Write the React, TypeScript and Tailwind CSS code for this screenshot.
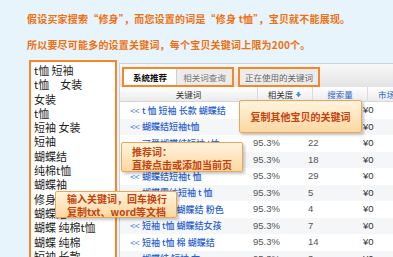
import React from 'react';

const cjk = { fontFamily: '"Noto Sans CJK SC", "Noto Sans", sans-serif' };

const inputWords = [
  't恤 短袖',
  't恤　女装',
  '女装',
  't恤',
  '短袖 女装',
  '短袖',
  '蝴蝶结',
  '纯棉t恤',
  '蝴蝶袖',
  '修身',
  '蝴蝶结',
  '蝴蝶 纯棉t恤',
  '蝴蝶 纯棉',
  '短袖 长款',
  '蝴蝶结 t恤',
];

const rows = [
  { kw: 't 恤 短袖 长款 蝴蝶结', rel: '95.3%', vol: '22', price: '¥0' },
  { kw: '蝴蝶结短袖t恤', rel: '95.3%', vol: '22', price: '¥0' },
  { kw: '可爱蝴蝶结短袖 t恤', rel: '95.3%', vol: '22', price: '¥0' },
  { kw: '韩版蝴蝶结短袖', rel: '95.3%', vol: '18', price: '¥0' },
  { kw: '蝴蝶结短袖t 恤', rel: '95.3%', vol: '29', price: '¥0' },
  { kw: '蝴蝶雪纺短袖 t 恤', rel: '95.3%', vol: '5', price: '¥0' },
  { kw: '短袖 t恤 蝴蝶结 粉色', rel: '95.3%', vol: '4', price: '¥0' },
  { kw: '短袖 t恤 蝴蝶结女孩', rel: '95.3%', vol: '7', price: '¥0' },
  { kw: '短袖 t恤 棉 蝴蝶结', rel: '95.3%', vol: '14', price: '¥0' },
  { kw: '蝴蝶结 短袖 女', rel: '95.3%', vol: '3', price: '¥0' },
];

const Callout: React.FC<{ className: string; children: React.ReactNode }> = ({ className, children }) => (
  <div
    className={`absolute rounded-[2px] border border-[#f0a458] bg-gradient-to-b from-[#fff4de] to-[#fcd7a0] text-[10px] font-bold leading-[13px] text-[#c4420c] shadow-[2px_2px_3px_rgba(0,0,0,0.22)] ${className}`}
  >
    {children}
  </div>
);

const App: React.FC = () => {
  return (
    <div className="relative h-[257px] w-[393px] overflow-hidden bg-[#e7f4fc]" style={cjk}>
      {/* Intro text */}
      <div className="pl-[27px] pt-[6px] text-[10px] font-bold leading-[26px] tracking-[0.2px] text-[#f0700f]">
        <div>假设买家搜索“修身”，而您设置的词是“修身 t恤”，宝贝就不能展现。</div>
        <div>所以要尽可能多的设置关键词，每个宝贝关键词上限为200个。</div>
      </div>

      <div className="mt-[2px] flex">
        {/* Keyword input box */}
        <div className="ml-[29px] h-[210px] w-[88px] shrink-0 border-2 border-[#f5862a] bg-white px-[3px] pt-[1px] text-[11px] leading-[14.3px] text-[#222]">
          {inputWords.map((w, i) => (
            <div key={i} className="whitespace-pre">{w}</div>
          ))}
        </div>

        {/* Result panel */}
        <div className="ml-[2px] mt-[3px] flex-1 border border-r-0 border-[#c9d3dc] bg-white">
          <div className="flex h-[23px] items-end gap-[4px] bg-gradient-to-b from-[#f8f8f8] to-[#e3e3e3] pl-[2px]">
            <div className="flex h-[20px] w-[112px] border-2 border-[#f5862a]">
              <div className="flex w-[52px] items-center justify-center bg-white text-[8.5px] font-bold text-[#111]">
                系统推荐
              </div>
              <div className="flex flex-1 items-center justify-center border-l border-[#cfcfcf] bg-[#ececec] text-[8.5px] text-[#777]">
                相关词查询
              </div>
            </div>
            <div className="flex h-[20px] w-[82px] items-center justify-center border-2 border-[#f5862a] bg-[#ececec] text-[8.5px] text-[#666]">
              正在使用的关键词
            </div>
          </div>

          {/* Header */}
          <div className="grid h-[15px] grid-cols-[137px_55px_55px_1fr] border-b border-[#d6d6d6] bg-gradient-to-b from-white to-[#ebebeb] text-[8.5px] leading-[15px]">
            <div className="text-center text-[#333]">关键词</div>
            <div className="flex items-center justify-center gap-[2px] border-l border-[#dcdcdc] text-[#333]">
              相关度
              <svg width="7" height="7" viewBox="0 0 8 8">
                <path d="M4 7 L1 3.5 H2.8 V1 H5.2 V3.5 H7 Z" fill="#3d8fe0" />
              </svg>
            </div>
            <div className="border-l border-[#dcdcdc] text-center text-[#2f62c8]">搜索量</div>
            <div className="overflow-hidden whitespace-nowrap border-l border-[#dcdcdc] pl-[10px] text-[#2f62c8]">市场均价</div>
          </div>

          {/* Rows */}
          {rows.map((r, i) => (
            <div
              key={i}
              className={`grid h-[16.5px] grid-cols-[130px_55px_55px_1fr] items-center ${i % 2 === 1 ? 'bg-[#f5f6f8]' : 'bg-white'}`}
            >
              <div className="flex items-center gap-[3px] overflow-hidden whitespace-nowrap pl-[10px] text-[9px] font-medium text-[#2a5fd0]">
                <span className="text-[9px] font-normal tracking-[-0.5px] text-[#4a7de0]">{'<<'}</span>
                <span className="whitespace-pre">{r.kw}</span>
              </div>
              <div className="pl-[3px] text-[9.5px] text-[#555]" style={{ fontFamily: '"Liberation Sans", sans-serif' }}>{r.rel}</div>
              <div className="pl-[3px] text-[9.5px] text-[#555]" style={{ fontFamily: '"Liberation Sans", sans-serif' }}>{r.vol}</div>
              <div className="pl-[3px] text-[9.5px] text-[#333]" style={{ fontFamily: '"Liberation Sans", sans-serif' }}>{r.price}</div>
            </div>
          ))}
        </div>
      </div>

      {/* Callouts */}
      <Callout className="left-[239px] top-[100px] flex h-[33px] w-[123px] items-center justify-center text-[10.5px]">
        复制其他宝贝的关键词
      </Callout>
      <Callout className="left-[121px] top-[142px] h-[30px] w-[122px] pl-[10px] pt-[2px]">
        <div>推荐词：</div>
        <div>直接点击或添加当前页</div>
      </Callout>
      <Callout className="left-[55px] top-[191px] h-[27px] w-[122px] pl-[11px] pt-[0px] leading-[12.5px]">
        <div>输入关键词，回车换行</div>
        <div>复制txt、word等文档</div>
      </Callout>
    </div>
  );
};

export default App;
